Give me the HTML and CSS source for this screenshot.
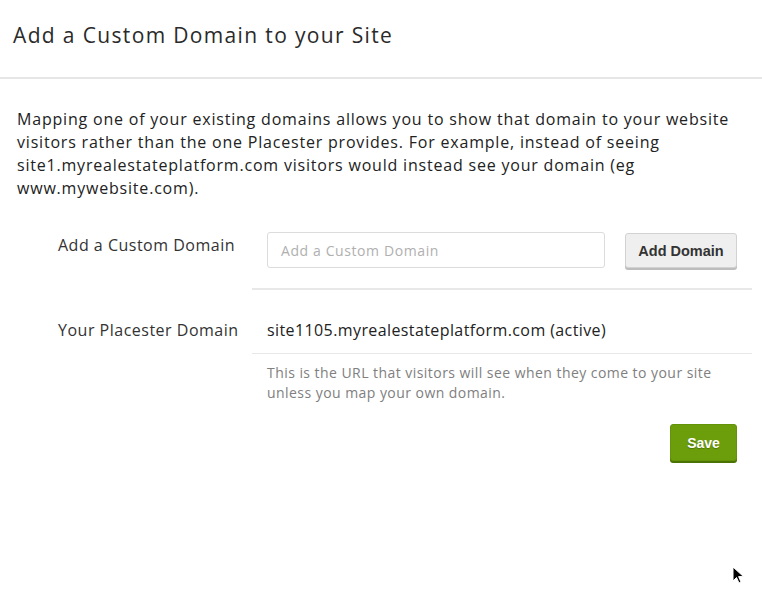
FILE: index.html
```html
<!DOCTYPE html>
<html>
<head>
<meta charset="utf-8">
<link rel="stylesheet" href="styles.css">
</head>
<body>
<div class="page">
  <header class="head">
    <h1 class="title">Add a Custom Domain to your Site</h1>
  </header>
  <p class="intro">Mapping one of your existing domains allows you to show that domain to your website visitors rather than the one Placester provides. For example, instead of seeing site1.myrealestateplatform.com visitors would instead see your domain (eg www.mywebsite.com).</p>
  <div class="form">
    <div class="row row-add">
      <div class="label">Add a Custom Domain</div>
      <div class="control">
        <input class="input" type="text" placeholder="Add a Custom Domain">
        <button class="btn btn-gray">Add Domain</button>
      </div>
    </div>
    <div class="row row-current">
      <div class="label">Your Placester Domain</div>
      <div class="control col">
        <div class="value">site1105.myrealestateplatform.com (active)</div>
        <div class="help">This is the URL that visitors will see when they come to your site unless you map your own domain.</div>
        <div class="actions">
          <button class="btn btn-green">Save</button>
        </div>
      </div>
    </div>
  </div>
  <svg class="cursor" width="14" height="20" viewBox="0 0 14 20"><path d="M1 1 L1 15 L4.5 11.5 L7 17 L9 16 L6.6 10.6 L11.5 10.6 Z" fill="#000" stroke="#fff" stroke-width="1"/></svg>
</div>
</body>
</html>
```
FILE: styles.css
```css
html, body { margin: 0; padding: 0; background: #fff; }
body { font-family: "Open Sans", "Liberation Sans", sans-serif; color: #222; }
.page { position: relative; width: 762px; height: 596px; overflow: hidden; }
.head { height: 79px; border-bottom: 2px solid #e6e6e6; box-sizing: border-box; padding: 21px 0 0 13px; }
.title { margin: 0; font-size: 21px; letter-spacing: 1.35px; font-weight: 400; color: #2a2a2a; line-height: 28px; }
.intro { margin: 29px 20px 0 17px; font-size: 16px; letter-spacing: 0.8px; line-height: 23px; color: #222; }
.form { margin-top: 32px; }
.row { display: flex; }
.label { width: 252px; flex: none; box-sizing: border-box; padding-left: 58px; font-size: 16px; letter-spacing: 0.5px; color: #333; }
.control { width: 500px; box-sizing: border-box; padding: 0 15px; display: flex; align-items: flex-start; }
.row-add .label { padding-top: 2px; line-height: 23px; }
.row-add .control { padding-bottom: 20px; border-bottom: 2px solid #e8e8e8; }
.input { width: 338px; height: 36px; box-sizing: border-box; border: 1px solid #dcdcdc; border-radius: 3px; padding: 0 13px; font-family: inherit; font-size: 14px; letter-spacing: 0.6px; color: #333; outline: none; }
.input::placeholder { color: #b0b0b0; }
.btn { font-family: "Liberation Sans", Arial, sans-serif; font-weight: 700; font-size: 14px; border-radius: 3px; cursor: pointer; padding: 0; }
.btn-gray { margin-left: 20px; margin-top: 1px; width: 112px; height: 35px; background: #efefef; border: 1px solid #d2d2d2; box-shadow: 0 2px 0 #bdbdbd; color: #333; font-size: 14.5px; }
.row-current { margin-top: 29px; }
.row-current .label { line-height: 23px; }
.col { flex-direction: column; align-items: stretch; padding: 0; }
.value { font-size: 16px; letter-spacing: 0.4px; line-height: 23px; color: #222; padding: 0 15px 11px 15px; border-bottom: 1px solid #e8e8e8; }
.help { font-size: 14px; letter-spacing: 0.45px; line-height: 20px; color: #808080; padding: 9px 15px 0 15px; }
.actions { display: flex; justify-content: flex-end; margin-top: 21px; padding-right: 15px; }
.btn-green { width: 67px; height: 37px; background: #6c9d0a; border: 1px solid #64920a; box-shadow: 0 2px 0 #4b7304; color: #fff; text-shadow: 0 1px 1px rgba(0,0,0,0.25); }
.cursor { position: absolute; left: 732px; top: 566px; }
```
